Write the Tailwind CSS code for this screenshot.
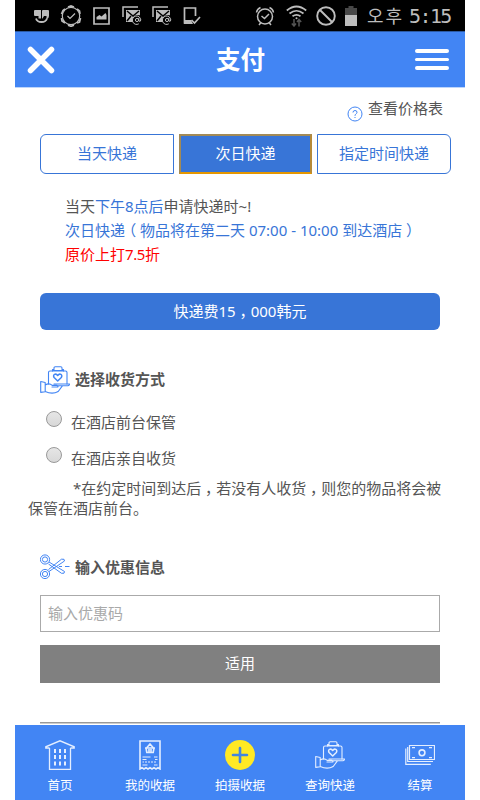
<!DOCTYPE html>
<html lang="zh-CN">
<head>
<meta charset="utf-8">
<title>支付</title>
<script src="https://cdn.jsdelivr.net/npm/@tailwindcss/browser@4"></script>
</head>
<body class="bg-white">
<svg class="hidden">
  <symbol id="parcel" viewBox="0 0 30 28">
    <g fill="none" stroke="currentColor" stroke-width="1.100" stroke-linejoin="round" stroke-linecap="round">
      <path d="M8.500 18V6.500q0-1.500 1.500-1.500h15.500q1.500 0 1.500 1.500V18"/>
      <path d="M12.500 5V3.500H14V2q0-1.200 1.200-1.200h5.600Q22 .8 22 2v1.500h1.500V5M12.500 4.500h11"/>
      <path stroke-width="1.500" d="M17.700 15l-3.600-3.500c-1.800-2.800 1.700-4.700 3.600-2 1.900-2.700 5.400-.8 3.600 2z"/>
      <path d="M.7 15.500l4.500 1v9.200l-4.500.7zM5.200 19q4-2.500 7 .4h4.300q1.700 0 1.500 1.600h-6M17.500 19.700h10.500q1.500-.2 1.500-1.700H14M5.200 25.500c5 2.300 9 2.300 13 0l4-5.300"/>
    </g>
  </symbol>
  <symbol id="mails" viewBox="0 0 21 20">
    <path d="M1 11V1h15" fill="none" stroke="#bdbdbd" stroke-width="1.500"/>
    <path d="M4 4h14v5l-5 7H4z" fill="#bdbdbd"/>
    <path d="M5 5l6 5 6-5M5 15l4-5" fill="none" stroke="#000" stroke-width="1.500"/>
    <circle cx="15.500" cy="14" r="5" fill="#000"/>
    <circle cx="15" cy="14" r="1.600" fill="none" stroke="#bdbdbd"/>
    <path d="M16.800 12v3q1.800 1 2-1a4.200 4.200 0 1 0-2 3.800" fill="none" stroke="#bdbdbd"/>
  </symbol>
</svg>
<div class="ml-[15px] flex h-[800px] w-[450px] flex-col overflow-hidden bg-white text-[15px] text-[#555] [font-family:'Noto_Sans','Noto_Sans_CJK_SC',sans-serif]">
  <div class="flex h-[31px] shrink-0 items-center bg-black text-[#bdbdbd]">
    <svg class="ml-[18px] h-[16px] w-[17px]" viewBox="0 0 17 16"><path fill="#bdbdbd" d="M2 2h6v8.500H5.500V8H2q-1 0-1-1V3q0-1 1-1zM10 2h5q1 0 1 1v5q0 2.500-2.500 3.500V8H11l-1.500 2.500H9V3q0-1 1-1z"/><path d="M3 10.500q1 3.500 5.500 3.500T14 10.500" stroke="#bdbdbd" stroke-width="1.800" fill="none"/></svg>
    <svg class="ml-[10px] h-[22px] w-[22px]" viewBox="0 0 22 22" fill="none" stroke="#bdbdbd" stroke-width="1.200"><circle cx="11" cy="11" r="8.700"/><path stroke-width="1.700" d="M8 2l3-1 3 1M17 4l2.500 2 .5 3M20.500 13l-1 4-2.500 1M14 20.300l-3 1-3-1M5 18l-3-2-.5-3M1.500 9L3 5.500 5 4"/><path d="M7.500 11l2.500 2.500 5-5"/></svg>
    <svg class="ml-[11px] h-[18px] w-[17px]" viewBox="0 0 17 18"><path d="M1 1h15v16H1z" fill="none" stroke="#bdbdbd" stroke-width="1.700"/><path d="M3.500 12.500V10l3-2 2 1.500L12.500 6l1 2v4.500z" fill="#bdbdbd"/></svg>
    <svg class="ml-[12px] h-[20px] w-[21px]"><use href="#mails"/></svg>
    <svg class="ml-[9px] h-[20px] w-[21px]"><use href="#mails"/></svg>
    <svg class="ml-[10px] h-[18px] w-[18px]" viewBox="0 0 18 18"><path d="M12.500 9V1H1.500v15H7" fill="none" stroke="#bdbdbd" stroke-width="1.700"/><path d="M1 13h7l2 4H1z" fill="#bdbdbd"/><path d="M8.500 13l3 3L17 10" fill="none" stroke="#bdbdbd" stroke-width="1.700"/></svg>
    <svg class="ml-[54px] h-[20px] w-[20px]" viewBox="0 0 20 20" fill="none" stroke="#bdbdbd" stroke-width="1.500"><circle cx="10" cy="10.500" r="7.500"/><path d="M6.500 10l3 2.500L14 8M1.500 6.500q.5-3.500 4-5M18.500 6.500q-.5-3.500-4-5M4 19l2-2.500M16 19l-2-2.500"/></svg>
    <svg class="ml-[11px] h-[22px] w-[21px]" viewBox="0 0 21 22" fill="none" stroke="#bdbdbd" stroke-width="1.700"><path d="M.8 5.500q9.700-8 19.400 0M3.500 8.500q7-5.500 14 0M6.500 11.300q4-3 8 0"/><circle cx="10.500" cy="13.300" r="1" fill="#bdbdbd" stroke="none"/><path stroke="#555" stroke-width="1.500" d="M8 14v7M5.800 18.500L8 21l2-2.500M13 21.500v-7M11 17l2-2.500 2.200 2.500"/></svg>
    <svg class="ml-[9px] h-[20px] w-[20px]" viewBox="0 0 20 20" fill="none" stroke="#bdbdbd" stroke-width="1.900"><circle cx="10" cy="10" r="8.800"/><path d="M4 4l12 12"/></svg>
    <svg class="ml-[8px] h-[20px] w-[14px]" viewBox="0 0 14 20"><path fill="#484848" d="M4.500 0h5v2H13v8H1V2h3.500z"/><path fill="#bdbdbd" d="M1 9h12v11H1z"/></svg>
    <span class="ml-[9px] w-[36px] whitespace-nowrap text-[18px] leading-[31px] tracking-[2px] [font-family:'Noto_Sans_CJK_KR',sans-serif]">오후</span>
    <span class="ml-[6px] whitespace-nowrap pt-[1px] text-[20px] leading-[31px] tracking-[-1.600px] [font-family:'DejaVu_Sans_Mono',monospace]">5:15</span>
  </div>
  <header class="flex h-[57px] shrink-0 items-center justify-between border-t border-b border-t-[#2b5aa4] border-b-[#bdd5fb] bg-[#4285f4] pr-[16px] pl-[12px] text-white">
    <svg class="h-[28px] w-[28px]" viewBox="0 0 28 28"><path d="M3.500 3.500l21 21M24.500 3.500l-21 21" stroke="#fff" stroke-width="5.500" stroke-linecap="round"/></svg>
    <h1 class="ml-[11px] text-[24.500px] font-bold leading-[56px]">支付</h1>
    <div class="flex w-[34px] flex-col gap-[5px]"><i class="h-[3.500px] rounded-full bg-white"></i><i class="h-[3.500px] rounded-full bg-white"></i><i class="h-[3.500px] rounded-full bg-white"></i></div>
  </header>
  <main class="h-[637px] shrink-0 px-[25px]">
    <div class="flex h-[46px] justify-end pt-[9px] pr-[-3px]">
      <svg class="mt-[9px] mr-[5px] h-[16px] w-[16px]" viewBox="0 0 16 16"><circle cx="8" cy="8" r="7" fill="none" stroke="#4285f4"/><path d="M6 6.500q0-2 2-2t2 1.800q0 1-1.200 1.800-.8.500-.8 1.700M8 11v1" fill="none" stroke="#4285f4"/></svg>
      <span class="-mr-[3px] h-[22px] leading-[22px]">查看价格表</span>
    </div>
    <div class="flex w-[411px] gap-[5px] text-[#3875d7]">
      <div class="h-[39.500px] w-[134px] rounded-l-[6px] border border-[#3875d7] text-center leading-[37px]">当天快递</div>
      <div class="h-[39.500px] w-[133px] border-2 border-t-[#a28a56] border-r-[#b58a3a] border-b-[#e59700] border-l-[#a28a56] bg-[#3875d7] text-center leading-[35px] text-white">次日快递</div>
      <div class="h-[39.500px] w-[134px] rounded-r-[6px] border border-[#3875d7] text-center leading-[37px]">指定时间快递</div>
    </div>
    <div class="mt-[20.500px] h-[72px] pl-[25px] leading-[24px] whitespace-nowrap text-[#3875d7]">
      <p><span class="text-[#555]">当天</span>下午8点后<span class="text-[#555]">申请快递时~!</span></p>
      <p>次日快递<span class="inline-block w-[15px] text-center [font-feature-settings:'halt']">（</span>物品将在第二天 07:00 - 10:00 到达酒店<span class="inline-block w-[15px] text-center [font-feature-settings:'halt']">）</span></p>
      <p class="text-[#f00]">原价上打<span class="tracking-[-0.400px]">7.5</span>折</p>
    </div>
    <div class="mt-[26.500px] h-[37.500px] rounded-[6px] bg-[#3875d7] text-center leading-[36px] text-white">快递费15<span class="inline-block w-[15px] text-center [font-feature-settings:'halt']">，</span>000韩元</div>
    <div class="mt-[35px] flex h-[30px] items-center">
      <svg class="h-[28px] w-[30px] text-[#4285f4]"><use href="#parcel"/></svg>
      <h2 class="-mt-[2px] ml-[5px] font-bold leading-[30px]">选择收货方式</h2>
    </div>
    <div class="mt-[9px] flex h-[36px] items-center pl-[6px]"><i class="-mt-[6px] h-[16px] w-[16px] rounded-full border border-[#999] bg-linear-to-b from-[#e6e6e6] to-[#d8d8d8]"></i><span class="ml-[9px]">在酒店前台保管</span></div>
    <div class="flex h-[36px] items-center pl-[6px]"><i class="-mt-[6px] h-[16px] w-[16px] rounded-full border border-[#999] bg-linear-to-b from-[#e6e6e6] to-[#d8d8d8]"></i><span class="ml-[9px]">在酒店亲自收货</span></div>
    <p class="-mx-[12px] mt-[2px] h-[40px] indent-[45px] leading-[20px]">*在约定时间到达后<span class="inline-block w-[15px] indent-0 text-center [font-feature-settings:'halt']">，</span>若没有人收货<span class="inline-block w-[15px] indent-0 text-center [font-feature-settings:'halt']">，</span>则您的物品将会被<br>保管在酒店前台。</p>
    <div class="mt-[34px] flex h-[30px] items-center">
      <svg class="h-[26px] w-[30px]" viewBox="0 0 30 26" fill="none" stroke="#4285f4"><circle cx="5" cy="5.500" r="4.600"/><circle cx="5" cy="5.500" r="2.600"/><circle cx="5" cy="20" r="4.600"/><circle cx="5" cy="20" r="2.600"/><path d="M9 8l15.500 9.500q.5 2.500-3 1.800L8.500 10M9 17.500L24.500 7q.5-2.500-3-1.800L8.500 15.500M19 12.500h3M25 12.500h4.500"/></svg>
      <h2 class="ml-[5px] font-bold leading-[30px]">输入优惠信息</h2>
    </div>
    <div class="mt-[13px] h-[37px] border border-[#aaa] pl-[7px] leading-[35px] text-[#a9a9a9]">输入优惠码</div>
    <div class="mt-[13px] h-[37.500px] bg-[#808080] text-center leading-[37px] text-white">适用</div>
    <div class="mt-[39.500px] h-[2px] border-t border-[#999] bg-[#ccc]"></div>
  </main>
  <nav class="grid h-[75px] shrink-0 grid-cols-5 bg-[#4285f4] pt-[15px] text-[12.500px] text-white">
    <div class="flex flex-col items-center"><svg class="h-[30px] w-[30px]" viewBox="0 0 30 30" fill="none" stroke="#e4eeff" stroke-width="1.300"><path d="M4.500 8v21.300h21V8M4.500 8H.8V6.800L15 .8l14.200 6V8h-3.700"/><path stroke-width="2" d="M10 9v4M15 9v4M20 9v4M10 15v4M15 15v4M20 15v4M10 21.500v4M15 21.500v4M20 21.500v4"/></svg><span class="mt-[6px] leading-[20px]">首页</span></div>
    <div class="flex flex-col items-center"><svg class="h-[30px] w-[22px]" viewBox="0 0 22 30" fill="none" stroke="#e4eeff" stroke-width="1.200"><path stroke-width="1.600" d="M1 29V1h20v28l-2-1.300-2 1.300-2-1.300-2 1.300-2-1.300L9 29l-2-1.300L5 29l-2-1.300z"/><path stroke-width="1.600" d="M6 8h10M7 8l.8 4.500h6.400L15 8M7.500 8L11 4l3.500 4M10 9v3M12 9v3"/><path d="M3.500 17h8M15 17h3.500M3.500 19.500h4M16 19.500h2.500M3.500 22h1.500M6 22h2M9 22h2M12 22h2M15 22h2M3.500 25h5M15 25h3.500"/></svg><span class="mt-[6px] leading-[20px]">我的收据</span></div>
    <div class="flex flex-col items-center"><svg class="h-[30px] w-[30px]" viewBox="0 0 30 30"><circle cx="15" cy="15" r="15" fill="#ffe924"/><path d="M15 8v14M8 15h14" stroke="#4285e0" stroke-width="2.600" stroke-linecap="round"/></svg><span class="mt-[6px] leading-[20px]">拍摄收据</span></div>
    <div class="flex flex-col items-center"><svg class="mt-[1px] h-[28px] w-[30px] text-[#e4eeff]"><use href="#parcel"/></svg><span class="mt-[7px] leading-[20px]">查询快递</span></div>
    <div class="flex flex-col items-center"><svg class="h-[30px] w-[30px]" viewBox="0 0 30 30" fill="none" stroke="#e4eeff" stroke-width="1.200"><path d="M4.500 5.500h25v14h-25zM2.700 7v14.500H28M.8 8.500v15.800h25"/><circle cx="17" cy="12.800" r="2.900" stroke-width="1.600"/><path d="M7 7.700h3M24 7.700h3M7 17.700h3M24 17.700h3"/></svg><span class="mt-[6px] leading-[20px]">结算</span></div>
  </nav>
</div>
</body>
</html>
